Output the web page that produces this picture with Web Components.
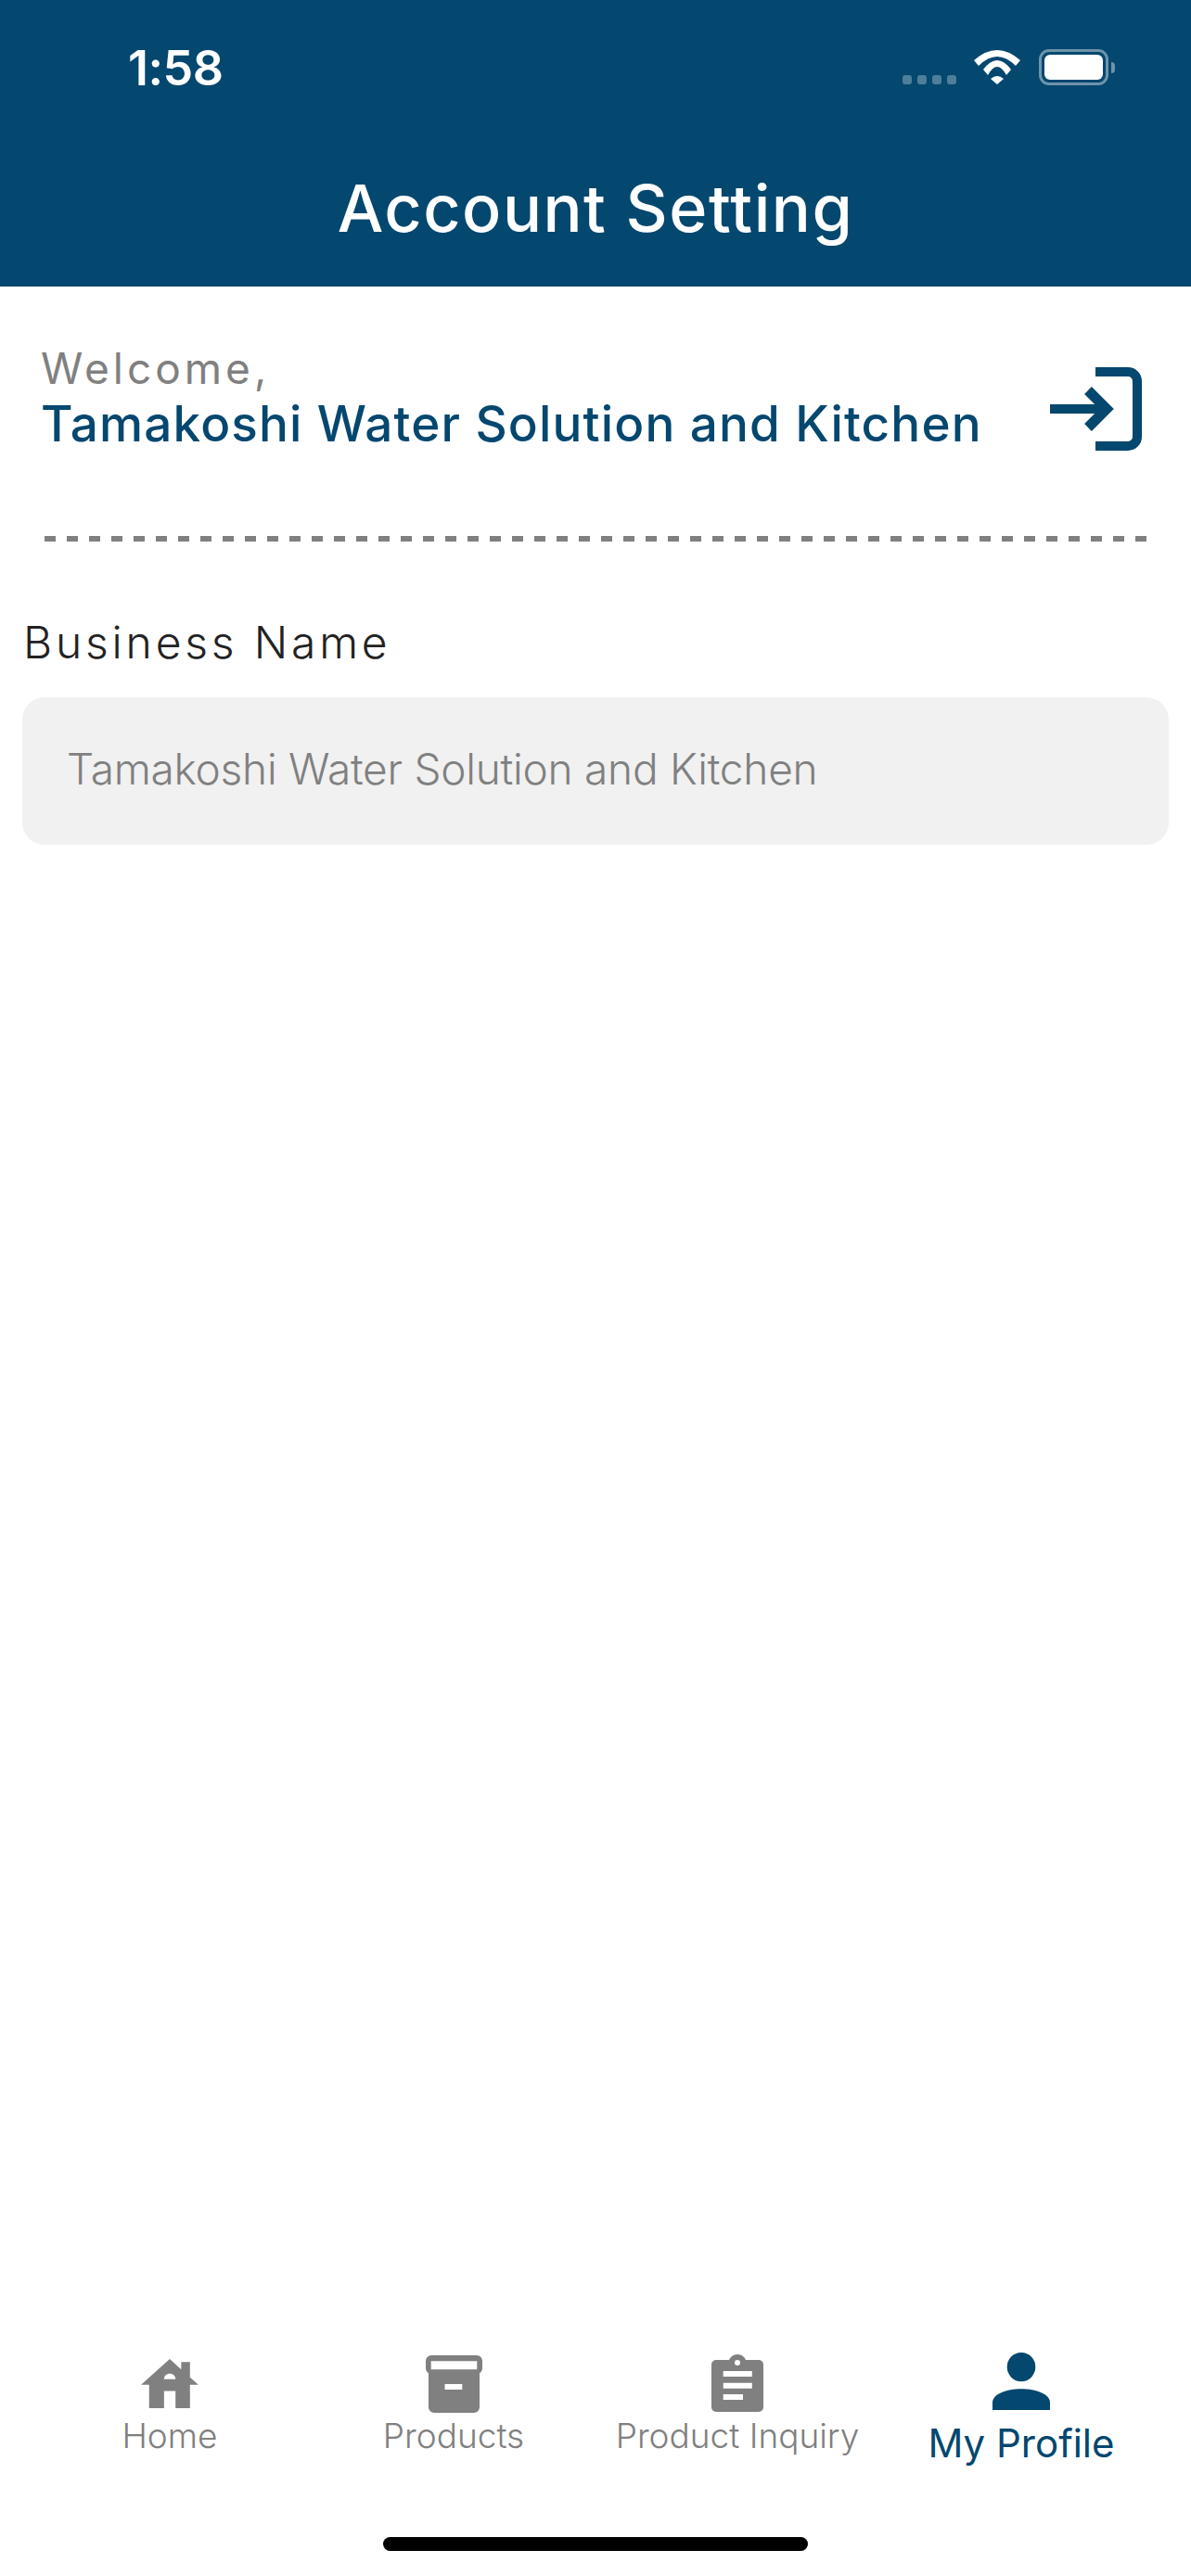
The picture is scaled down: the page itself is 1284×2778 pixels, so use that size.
<!DOCTYPE html>
<html lang="en">
<head>
<meta charset="utf-8">
<title>Account Setting</title>
<style>
  html, body { margin: 0; padding: 0; background: #fff; }
  body { width: 1284px; height: 2778px; font-family: Inter, "Liberation Sans", sans-serif; }
</style>
</head>
<body>
<app-screen>
  <app-header slot="top" title-text="Account Setting" time="1:58"></app-header>
  <welcome-panel greeting="Welcome," name="Tamakoshi Water Solution and Kitchen"></welcome-panel>
  <form-field label="Business Name" value="Tamakoshi Water Solution and Kitchen"></form-field>
  <tab-bar slot="bottom">
    <tab-item label="Home">
      <svg width="62" height="53" viewBox="0 0 61.4 52.7" style="margin-top:-1px">
        <path fill-rule="evenodd" fill="currentColor" d="M30.7 0L43 11.100V3.300H52.400V19.600L61.400 27.700H52.400V52.700H36.900V34.300H24.600V52.700H8.600V27.700H0ZM24.600 21.700H36.900C36.900 13.700 24.600 13.700 24.600 21.700Z"/>
      </svg>
    </tab-item>
    <tab-item label="Products">
      <svg width="61" height="62" viewBox="0 0 61 62">
        <path fill-rule="evenodd" fill="currentColor" d="M6 0H55A6 6 0 0 1 61 6V14A6 6 0 0 1 58 19.2V56A6 6 0 0 1 52 62H9A6 6 0 0 1 3 56V19.2A6 6 0 0 1 0 14V6A6 6 0 0 1 6 0ZM5.7 6.3V15.3H55.3V6.3ZM20.5 31V37H39.3V31Z"/>
      </svg>
    </tab-item>
    <tab-item label="Product Inquiry">
      <svg width="56" height="62" viewBox="0 0 56 62" style="margin-top:-2px">
        <path fill-rule="evenodd" fill="currentColor" d="M5 6H19C20.5 2.4 24 0 28 0S35.500 2.400 37 6H51A5 5 0 0 1 56 11V57A5 5 0 0 1 51 62H5A5 5 0 0 1 0 57V11A5 5 0 0 1 5 6ZM28 6A3 3 0 1 0 28 12A3 3 0 1 0 28 6ZM12.700 18V24H43.800V18ZM12.700 30.700V36.700H43.800V30.700ZM12.700 43V49H34V43Z"/>
      </svg>
    </tab-item>
    <tab-item label="My Profile" active>
      <svg width="62" height="62" viewBox="0 0 62 62" style="margin-top:-6px">
        <ellipse cx="31" cy="15.600" rx="15.300" ry="15.600" fill="currentColor"/>
        <path fill="currentColor" d="M0 62V54C0 45 15 39.300 31 39.300S62 45 62 54V62Z"/>
      </svg>
    </tab-item>
  </tab-bar>
</app-screen>

<script>
// every element keeps its markup and styles in its own open shadow root
const NAVY = '#04476f';
const GREY = '#808080';

customElements.define('app-screen', class extends HTMLElement {
  constructor() {
    super();
    this.attachShadow({ mode: 'open' }).innerHTML = `
      <style>
        :host { display: flex; flex-direction: column; width: 1284px; height: 2778px; background: #fff; }
        main { flex: 1; display: flex; flex-direction: column; }
      </style>
      <slot name="top"></slot>
      <main><slot></slot></main>
      <slot name="bottom"></slot>`;
  }
});

customElements.define('app-header', class extends HTMLElement {
  constructor() {
    super();
    this.attachShadow({ mode: 'open' }).innerHTML = `
      <style>
        :host { display: block; height: 309px; background: ${NAVY}; color: #fff; font-family: Inter, "Liberation Sans", sans-serif; }
        .status { display: flex; align-items: flex-start; height: 53px; padding: 53px 82px 0 138px; }
        .time { flex: 1; font-size: 52px; line-height: 41px; font-weight: 600; letter-spacing: -.5px; }
        .dots { display: flex; gap: 6px; margin: 28px 19px 0 0; }
        .dots i { width: 10px; height: 10px; border-radius: 3px; background: rgba(255,255,255,.3); }
        .wifi { display: block; margin: 1px 20px 0 0; }
        .battery { display: flex; align-items: center; gap: 3px; }
        .cell { width: 75px; height: 39px; box-sizing: border-box; padding: 3px; border: 3px solid rgba(255,255,255,.42); border-radius: 11px; }
        .cell b { display: block; height: 100%; background: #fff; border-radius: 6px; }
        .nub { width: 4px; height: 12px; background: rgba(255,255,255,.42); border-radius: 0 6px 6px 0; }
        h1 { margin: 0; padding-top: 77px; text-align: center; font-size: 70px; line-height: 84px; font-weight: 500; letter-spacing: 1.500px; }
      </style>
      <div class="status">
        <span class="time">${this.getAttribute('time')}</span>
        <div class="dots"><i></i><i></i><i></i><i></i></div>
        <svg class="wifi" width="50" height="37" viewBox="0 0 50 37" fill="#fff">
          <path d="M0 11Q25 -11 50 11L45 17Q25 -3 5 17Z"/>
          <path d="M10 21Q25 1 40 21L35 27Q25 9 15 27Z"/>
          <path d="M18 31Q25 25 32 31L25 37Z"/>
        </svg>
        <div class="battery"><div class="cell"><b></b></div><div class="nub"></div></div>
      </div>
      <h1>${this.getAttribute('title-text')}</h1>`;
  }
});

customElements.define('welcome-panel', class extends HTMLElement {
  constructor() {
    super();
    this.attachShadow({ mode: 'open' }).innerHTML = `
      <style>
        :host { display: block; padding: 59px 53px 0 44px; font-family: Inter, "Liberation Sans", sans-serif; }
        .row { display: flex; justify-content: space-between; align-items: flex-start; }
        .greeting { color: ${GREY}; font-size: 46px; line-height: 59px; letter-spacing: 4px; }
        .name { color: ${NAVY}; font-size: 53px; line-height: 60px; font-weight: 500; letter-spacing: 1.150px; white-space: nowrap; }
        svg { display: block; margin-top: 28px; }
        .rule { height: 6px; margin: 91px -16px 0 4px;
          background: repeating-linear-gradient(90deg, ${GREY} 0 12px, transparent 12px 24px); }
      </style>
      <div class="row">
        <div>
          <div class="greeting">${this.getAttribute('greeting')}</div>
          <div class="name">${this.getAttribute('name')}</div>
        </div>
        <svg width="99" height="90" viewBox="0 0 99 90" fill="none" stroke="${NAVY}" stroke-width="10">
          <path d="M49 5H84A10 10 0 0 1 94 15V75A10 10 0 0 1 84 85H49"/>
          <path d="M0 45H60"/>
          <path d="M41 25L61 45L41 65" stroke-width="11"/>
        </svg>
      </div>
      <div class="rule"></div>`;
  }
});

customElements.define('form-field', class extends HTMLElement {
  constructor() {
    super();
    this.attachShadow({ mode: 'open' }).innerHTML = `
      <style>
        :host { display: block; padding: 84px 24px 0; font-family: Inter, "Liberation Sans", sans-serif; }
        label { display: block; padding-left: 1px; color: #222; font-size: 48px; line-height: 50px; font-weight: 300; letter-spacing: 3.800px; }
        .box { display: flex; align-items: center; height: 159px; margin-top: 34px; padding: 0 0 5px 48px; box-sizing: border-box; background: #f1f1f1; border-radius: 24px; color: ${GREY}; font-size: 46px; letter-spacing: -.25px; font-weight: 300; }
      </style>
      <label>${this.getAttribute('label')}</label>
      <div class="box">${this.getAttribute('value')}</div>`;
  }
});

customElements.define('tab-bar', class extends HTMLElement {
  constructor() {
    super();
    this.attachShadow({ mode: 'open' }).innerHTML = `
      <style>
        :host { display: block; height: 241px; box-sizing: border-box; padding: 0 30px; }
        .tabs { display: grid; grid-template-columns: repeat(4, 1fr); }
        .home { width: 458px; height: 15px; margin: 0 auto; background: #000; border-radius: 8px; margin-top: 71px; }
      </style>
      <div class="tabs"><slot></slot></div>
      <div class="home"></div>`;
  }
});

customElements.define('tab-item', class extends HTMLElement {
  constructor() {
    super();
    const active = this.hasAttribute('active');
    this.attachShadow({ mode: 'open' }).innerHTML = `
      <style>
        :host { display: flex; flex-direction: column; align-items: center; color: ${active ? NAVY : GREY}; font-family: Inter, "Liberation Sans", sans-serif; }
        .icon { display: flex; align-items: center; justify-content: center; height: 68px; }
        .label { font-size: ${active ? 42 : 37}px; line-height: ${active ? 60 : 44}px; font-weight: ${active ? 400 : 300}; white-space: nowrap; }
      </style>
      <div class="icon"><slot></slot></div>
      <div class="label">${this.getAttribute('label')}</div>`;
  }
});
</script>
</body>
</html>
